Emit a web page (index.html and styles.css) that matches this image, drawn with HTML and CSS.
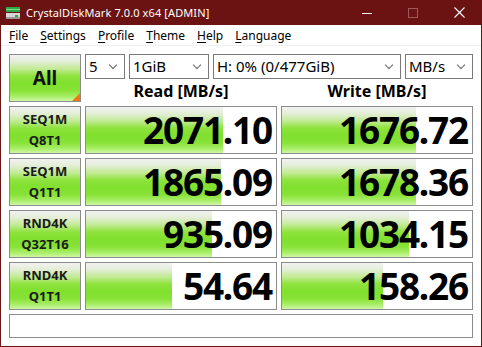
FILE: index.html
```html
<!DOCTYPE html>
<html lang="en">

<head>
    <meta charset="UTF-8">
    <title>CrystalDiskMark 7.0.0 x64 [ADMIN]</title>
    <link rel="stylesheet" href="styles.css">
</head>

<body>
    <div class="window">
        <div class="titlebar">
            <svg class="app-icon" width="16" height="16" viewBox="0 0 16 16">
                <rect x="1" y="2" width="14" height="5" fill="#2fa84a"/>
                <rect x="1" y="4" width="14" height="1" fill="#7fe08a"/>
                <rect x="1" y="8" width="14" height="6" fill="#d8d8d8"/>
                <rect x="1" y="12" width="14" height="2" fill="#9a9a9a"/>
                <rect x="10" y="10" width="3" height="2" fill="#2fa84a"/>
            </svg>
            <span class="title">CrystalDiskMark 7.0.0 x64 [ADMIN]</span>
            <div class="controls">
                <span class="ctl">
                    <svg width="10" height="10" viewBox="0 0 10 10"><path d="M0 5.5H10" stroke="#fff" stroke-width="1"/></svg>
                </span>
                <span class="ctl">
                    <svg width="10" height="10" viewBox="0 0 10 10"><rect x="0.5" y="0.5" width="9" height="9" fill="none" stroke="#a05858" stroke-width="1"/></svg>
                </span>
                <span class="ctl">
                    <svg width="11" height="11" viewBox="0 0 11 11"><path d="M0.5 0.5L10.5 10.5M10.5 0.5L0.5 10.5" stroke="#fff" stroke-width="1.1"/></svg>
                </span>
            </div>
        </div>

        <div class="menubar">
            <span><u>F</u>ile</span>
            <span><u>S</u>ettings</span>
            <span><u>P</u>rofile</span>
            <span><u>T</u>heme</span>
            <span><u>H</u>elp</span>
            <span><u>L</u>anguage</span>
        </div>

        <div class="content">
            <div class="grid">
                <div class="btn btn-all">All<span class="corner"></span></div>
                <div class="top-right">
                    <div class="combos">
                        <div class="combo w-count">5</div>
                        <div class="combo w-size">1GiB</div>
                        <div class="combo w-drive">H: 0% (0/477GiB)</div>
                        <div class="combo w-unit">MB/s</div>
                    </div>
                    <div class="headers">
                        <div class="head">Read [MB/s]</div>
                        <div class="head">Write [MB/s]</div>
                    </div>
                </div>

                <div class="btn label">SEQ1M<br>Q8T1</div>
                <div class="value"><div class="bar" style="width: 137px"></div><span>2071.10</span></div>
                <div class="value"><div class="bar" style="width: 134px"></div><span>1676.72</span></div>

                <div class="btn label">SEQ1M<br>Q1T1</div>
                <div class="value"><div class="bar" style="width: 135px"></div><span>1865.09</span></div>
                <div class="value"><div class="bar" style="width: 134px"></div><span>1678.36</span></div>

                <div class="btn label">RND4K<br>Q32T16</div>
                <div class="value"><div class="bar" style="width: 126px"></div><span>935.09</span></div>
                <div class="value"><div class="bar" style="width: 127px"></div><span>1034.15</span></div>

                <div class="btn label">RND4K<br>Q1T1</div>
                <div class="value"><div class="bar" style="width: 86px"></div><span>54.64</span></div>
                <div class="value"><div class="bar" style="width: 101px"></div><span>158.26</span></div>

                <div class="comment"></div>
            </div>
        </div>
    </div>
</body>

</html>
```

FILE: styles.css
```css
html, body {
    margin: 0;
    padding: 0;
}

body {
    font-family: "Noto Sans", "Open Sans", sans-serif;
    color: #000;
    background: #fff;
}

.window {
    width: 482px;
    height: 347px;
    box-sizing: border-box;
    border: 1px solid #6b1616;
    border-top: none;
    background: #fff;
    display: flex;
    flex-direction: column;
}

.titlebar {
    height: 25px;
    background-color: #6b1212;
    color: #fff;
    display: flex;
    align-items: center;
    margin: 0 -1px;
}

.app-icon {
    margin-left: 5px;
    margin-right: 5px;
}

.title {
    font-size: 11px;
    letter-spacing: 0.1px;
}

.controls {
    margin-left: auto;
    display: flex;
    height: 25px;
}

.ctl {
    width: 46px;
    display: flex;
    align-items: center;
    justify-content: center;
}

.menubar {
    height: 20px;
    display: flex;
    align-items: center;
    gap: 12px;
    padding-left: 8px;
    font-size: 12px;
    border-bottom: 1px solid #f0f0f0;
}

.menubar u {
    text-decoration-thickness: 1px;
    text-underline-offset: 2px;
}

.content {
    padding: 8px 8px 8px 8px;
}

.grid {
    display: grid;
    grid-template-columns: 72px 192px 192px;
    grid-template-rows: 48px 48px 48px 48px 48px 24px;
    column-gap: 4px;
    row-gap: 4px;
}

.btn {
    box-sizing: border-box;
    border: 1px solid #8c8c8c;
    background: linear-gradient(to bottom, #f2f2f2 0%, #e4eed8 14%, #bdea8c 32%, #8ee23c 46%, #80e02e 62%, #88e238 78%, #aef070 92%, #d0f6a8 100%);
    display: flex;
    align-items: center;
    justify-content: center;
    text-align: center;
    color: #1a1a1a;
    font-weight: bold;
    position: relative;
}

.btn-all {
    font-size: 19px;
    color: #111;
}

.corner {
    position: absolute;
    right: 0;
    bottom: 0;
    width: 0;
    height: 0;
    border-left: 8px solid transparent;
    border-bottom: 8px solid #f07814;
}

.label {
    font-size: 13px;
    line-height: 21px;
}

.top-right {
    grid-column: 2 / 4;
    display: flex;
    flex-direction: column;
}

.combos {
    display: flex;
    gap: 4px;
    height: 25px;
}

.combo {
    box-sizing: border-box;
    height: 25px;
    border: 1px solid #7a7a7a;
    font-size: 15px;
    line-height: 22px;
    padding-left: 3px;
    position: relative;
    white-space: nowrap;
}

.combo::after {
    content: "";
    position: absolute;
    right: 8px;
    top: 7px;
    width: 5px;
    height: 5px;
    border-right: 1px solid #666;
    border-bottom: 1px solid #666;
    transform: rotate(45deg);
}

.w-count { width: 40px; }
.w-size { width: 80px; }
.w-drive { width: 188px; }
.w-unit { width: 68px; }

.headers {
    flex: 1;
    display: grid;
    grid-template-columns: 192px 192px;
    column-gap: 4px;
}

.head {
    text-align: center;
    font-weight: bold;
    font-size: 16px;
    line-height: 22px;
    padding-top: 1px;
}

.value {
    box-sizing: border-box;
    border: 1px solid #8c8c8c;
    position: relative;
    display: flex;
    align-items: center;
    justify-content: flex-end;
    padding-right: 4px;
}

.value .bar {
    position: absolute;
    left: 0;
    top: 0;
    bottom: 0;
    background: linear-gradient(to bottom, #f2f2f2 0%, #e4eed8 14%, #bdea8c 32%, #8ee23c 46%, #80e02e 62%, #88e238 78%, #aef070 92%, #d0f6a8 100%);
}

.value span {
    position: relative;
    font-size: 37px;
    font-weight: bold;
    line-height: 42px;
    letter-spacing: -1.2px;
}

.comment {
    grid-column: 1 / 4;
    border: 1px solid #8c8c8c;
}
```
